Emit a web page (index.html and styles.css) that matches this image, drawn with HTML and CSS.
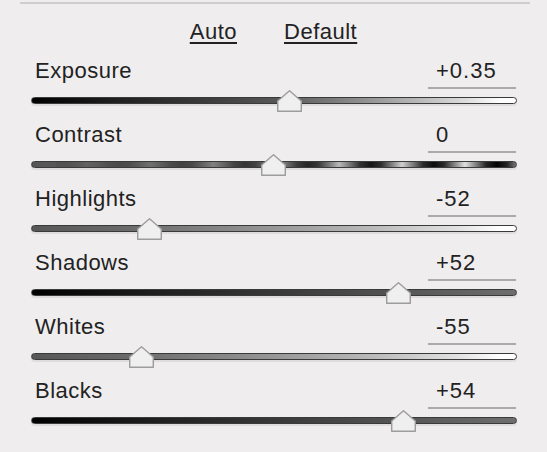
FILE: index.html
```html
<!DOCTYPE html>
<html>
<head>
<meta charset="utf-8">
<link rel="stylesheet" href="styles.css">
</head>
<body>
<div class="panel">
  <div class="rule"></div>
  <div class="actions">
    <span class="link">Auto</span>
    <span class="link">Default</span>
  </div>
  <div class="sliders">
    <div class="row">
      <div class="head"><span class="label">Exposure</span><span class="value">+0.35</span></div>
      <div class="track t-exposure"><svg class="thumb" style="left:245px" viewBox="0 0 25 22" width="25" height="22"><polygon points="12.5,0.8 24.3,11 24.3,21.3 0.7,21.3 0.7,11"/></svg></div>
    </div>
    <div class="row">
      <div class="head"><span class="label">Contrast</span><span class="value">0</span></div>
      <div class="track t-contrast"><svg class="thumb" style="left:229px" viewBox="0 0 25 22" width="25" height="22"><polygon points="12.5,0.8 24.3,11 24.3,21.3 0.7,21.3 0.7,11"/></svg></div>
    </div>
    <div class="row">
      <div class="head"><span class="label">Highlights</span><span class="value">-52</span></div>
      <div class="track t-light"><svg class="thumb" style="left:105px" viewBox="0 0 25 22" width="25" height="22"><polygon points="12.5,0.8 24.3,11 24.3,21.3 0.7,21.3 0.7,11"/></svg></div>
    </div>
    <div class="row">
      <div class="head"><span class="label">Shadows</span><span class="value">+52</span></div>
      <div class="track t-dark"><svg class="thumb" style="left:354px" viewBox="0 0 25 22" width="25" height="22"><polygon points="12.5,0.8 24.3,11 24.3,21.3 0.7,21.3 0.7,11"/></svg></div>
    </div>
    <div class="row">
      <div class="head"><span class="label">Whites</span><span class="value">-55</span></div>
      <div class="track t-light"><svg class="thumb" style="left:97px" viewBox="0 0 25 22" width="25" height="22"><polygon points="12.5,0.8 24.3,11 24.3,21.3 0.7,21.3 0.7,11"/></svg></div>
    </div>
    <div class="row">
      <div class="head"><span class="label">Blacks</span><span class="value">+54</span></div>
      <div class="track t-dark"><svg class="thumb" style="left:359px" viewBox="0 0 25 22" width="25" height="22"><polygon points="12.5,0.8 24.3,11 24.3,21.3 0.7,21.3 0.7,11"/></svg></div>
    </div>
  </div>
</div>
</body>
</html>
```

FILE: styles.css
```css
html, body {
  margin: 0;
  padding: 0;
  background: #efedee;
}
body {
  width: 547px;
  height: 452px;
  overflow: hidden;
  font-family: "Liberation Sans", Arial, sans-serif;
  font-size: 22px;
  color: #222;
  letter-spacing: 0.5px;
}
.panel {
  padding-top: 2px;
}
.rule {
  margin-left: 20px;
  width: 510px;
  height: 2px;
  background: #cfcdce;
}
.actions {
  margin-top: 15px;
  height: 25px;
  line-height: 25px;
  display: flex;
  justify-content: center;
  gap: 47px;
}
.link {
  text-decoration: underline;
  text-decoration-thickness: 2px;
  text-underline-offset: 3px;
}
.sliders {
  margin-top: 14px;
  margin-left: 31px;
  width: 486px;
}
.row {
  height: 64px;
}
.head {
  display: flex;
  justify-content: space-between;
  align-items: flex-start;
  height: 31px;
  line-height: 25px;
}
.label {
  padding-left: 4px;
}
.value {
  box-sizing: border-box;
  width: 88px;
  height: 31px;
  margin-right: 1px;
  padding-left: 8px;
  letter-spacing: 1px;
  border-bottom: 2px solid #acaaab;
}
.track {
  position: relative;
  box-sizing: border-box;
  margin-top: 8px;
  height: 7px;
  border: 1px solid #3a3a3a;
  border-radius: 3.5px;
  box-shadow: 0 2px 1px rgba(0, 0, 0, 0.07);
}
.t-exposure {
  background: linear-gradient(to right, #000 0%, #1c1c1c 15%, #3a3a3a 35%, #555 50%, #7a7a7a 62%, #a8a8a8 75%, #d6d6d6 88%, #fff 97%);
}
.t-contrast {
  background:
    linear-gradient(to right, rgba(85,85,85,1) 0%, rgba(85,85,85,0.75) 35%, rgba(85,85,85,0.25) 70%, rgba(85,85,85,0) 100%),
    repeating-linear-gradient(to right, #000 0px, #222 10px, #eee 31px, #222 52px, #000 63px);
  background-position: 0 0, 24px 0;
}
.t-light {
  background: linear-gradient(to right, #575757 0%, #6a6a6a 20%, #8f8f8f 45%, #b9b9b9 70%, #e2e2e2 88%, #fff 97%);
}
.t-dark {
  background: linear-gradient(to right, #000 0%, #1e1e1e 25%, #383838 50%, #545454 75%, #6e6e6e 100%);
}
.thumb {
  position: absolute;
  top: -8px;
  display: block;
}
.thumb polygon {
  fill: #efefef;
  stroke: #9c9c9c;
  stroke-width: 1.4;
  stroke-linejoin: round;
}
```
